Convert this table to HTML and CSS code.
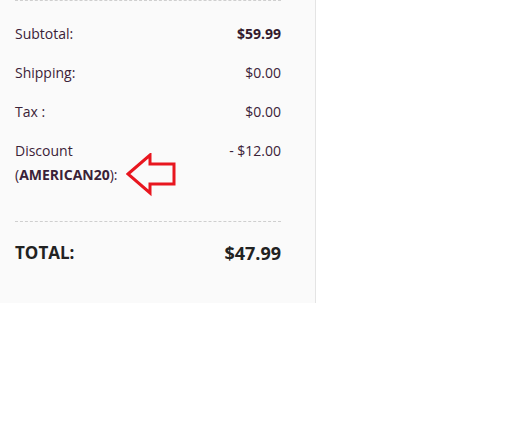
FILE: index.html
```html
<!DOCTYPE html>
<html>
<head>
<meta charset="utf-8">
<link rel="stylesheet" href="styles.css">
</head>
<body>
<div class="summary">
  <div class="rows">
    <div class="row"><span>Subtotal:</span><span class="strong">$59.99</span></div>
    <div class="row"><span>Shipping:</span><span>$0.00</span></div>
    <div class="row"><span>Tax :</span><span>$0.00</span></div>
    <div class="row discount">
      <span class="dlabel">Discount<br>(<b>AMERICAN20</b>):
        <svg class="arrow" width="52" height="44" viewBox="0 0 52 44"><polygon points="2,21 24,2 24,11 48,11 48,31 24,31 24,40" fill="none" stroke="#e8161f" stroke-width="3" stroke-linejoin="miter"/></svg>
      </span>
      <span>- $12.00</span>
    </div>
  </div>
  <div class="total"><span>TOTAL:</span><span class="tval">$47.99</span></div>
</div>
</body>
</html>
```
FILE: styles.css
```css
html, body { margin: 0; padding: 0; background: #fff; }
body { font-family: "Open Sans", "Liberation Sans", sans-serif; }
.summary {
  width: 316px;
  height: 303px;
  background: #fafafa;
  border-right: 1px solid #e4e4e4;
  padding: 0 34px 0 15px;
  box-sizing: border-box;
}
.rows {
  border-top: 1px dashed #cfcfcf;
  border-bottom: 1px dashed #cfcfcf;
  padding: 21px 0 34px;
  display: flex;
  flex-direction: column;
  gap: 15px;
}
.row {
  display: flex;
  justify-content: space-between;
  align-items: flex-start;
  font-size: 14px;
  line-height: 24px;
  color: #3a2238;
}
.strong { font-weight: 700; color: #331a2d; }
.dlabel { position: relative; }
.dlabel b { font-weight: 700; }
.arrow { position: absolute; left: 111px; top: 14px; }
.total {
  display: flex;
  justify-content: space-between;
  align-items: center;
  padding-top: 19px;
  font-weight: 700;
  color: #222;
  line-height: 24px;
}
.total span:first-child { font-size: 17px; }
.tval { font-size: 18px; }
```
